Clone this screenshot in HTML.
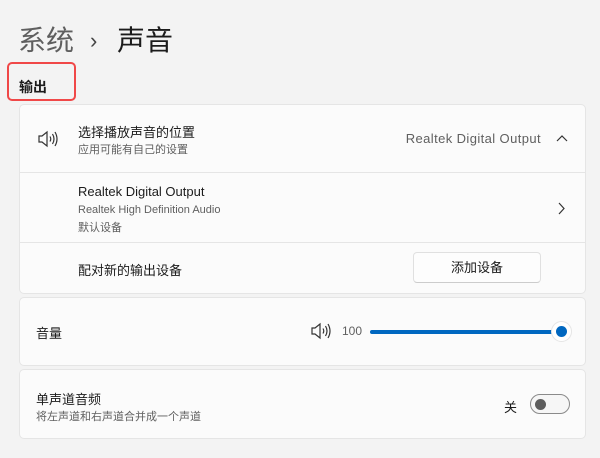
<!DOCTYPE html>
<html><head><meta charset="utf-8"><style>
*{margin:0;padding:0;box-sizing:border-box}
body{width:600px;height:458px;background:#f3f3f3;font-family:"Liberation Sans","Noto Sans CJK SC",sans-serif;position:relative;overflow:hidden;color:#1b1b1b}
.a{position:absolute}
.card{position:absolute;left:19px;width:567px;background:#fbfbfb;border:1px solid #e5e5e5;border-radius:5px}
.t{font-size:13px;color:#1b1b1b}
.s{font-size:11px;color:#5f5f5f}
</style></head><body>
<div class="a" style="left:18px;top:22px;font-size:28px;color:#5f5f5f;line-height:38px">系统</div>
<div class="a" style="left:90px;top:22px;font-size:22px;color:#444;line-height:38px">›</div>
<div class="a" style="left:117px;top:22px;font-size:28px;color:#1b1b1b;line-height:38px">声音</div>
<div class="a" style="left:7px;top:62px;width:69px;height:39px;border:2.5px solid #f04848;border-radius:5px"></div>
<div class="a" style="left:19px;top:78px;font-size:14px;font-weight:bold;line-height:18px">输出</div>

<div class="card" style="top:104px;height:190px">
 <div class="a" style="left:0;top:67px;width:565px;border-top:1px solid #e5e5e5"></div>
 <div class="a" style="left:0;top:137px;width:565px;border-top:1px solid #e5e5e5"></div>
</div>
<svg class="a" style="left:37px;top:129px" width="22" height="20" viewBox="0 0 22 20" fill="none" stroke="#333" stroke-width="1.2"><path d="M2 7h3l5-4v14l-5-4H2z"/><path d="M13 7.5q1.5 2.5 0 5M15.5 5q3 5 0 10M18 3q4 7 0 14"/></svg>
<div class="a t" style="left:78px;top:122px">选择播放声音的位置</div>
<div class="a s" style="left:78px;top:141px">应用可能有自己的设置</div>
<div class="a" style="right:59px;top:131px;font-size:13px;color:#5f5f5f;letter-spacing:0.4px">Realtek Digital Output</div>
<svg class="a" style="left:556px;top:134px" width="12" height="8"><path d="M1 7l5-5 5 5" fill="none" stroke="#333" stroke-width="1.2"/></svg>
<div class="a t" style="left:78px;top:184px">Realtek Digital Output</div>
<div class="a s" style="left:78px;top:204px">Realtek High Definition Audio</div>
<div class="a s" style="left:78px;top:219px">默认设备</div>
<svg class="a" style="left:558px;top:202px" width="8" height="13"><path d="M1 1l5 5.5-5 5.5" fill="none" stroke="#333" stroke-width="1.2"/></svg>
<div class="a t" style="left:78px;top:260px">配对新的输出设备</div>
<div class="a" style="left:413px;top:252px;width:128px;height:31px;background:#fdfdfd;border:1px solid #e0e0e0;border-bottom-color:#ccc;border-radius:4px;font-size:13px;text-align:center;line-height:29px">添加设备</div>

<div class="card" style="top:297px;height:69px"></div>
<div class="a t" style="left:36px;top:323px">音量</div>
<svg class="a" style="left:310px;top:321px" width="22" height="20" viewBox="0 0 22 20" fill="none" stroke="#333" stroke-width="1.2"><path d="M2 7h3l5-4v14l-5-4H2z"/><path d="M13 7.5q1.5 2.5 0 5M15.5 5q3 5 0 10M18 3q4 7 0 14"/></svg>
<div class="a" style="left:342px;top:324px;font-size:12px;color:#5f5f5f">100</div>
<div class="a" style="left:370px;top:330px;width:190px;height:4px;background:#0067c0;border-radius:2px"></div>
<div class="a" style="left:551px;top:321px;width:21px;height:21px;border-radius:50%;background:#fff;border:1px solid #e5e5e5"></div>
<div class="a" style="left:556px;top:326px;width:11px;height:11px;border-radius:50%;background:#0067c0"></div>

<div class="card" style="top:369px;height:70px"></div>
<div class="a t" style="left:36px;top:389px">单声道音频</div>
<div class="a s" style="left:36px;top:408px">将左声道和右声道合并成一个声道</div>
<div class="a" style="left:504px;top:397px;font-size:13px">关</div>
<div class="a" style="left:530px;top:394px;width:40px;height:20px;border:1px solid #8a8a8a;border-radius:10px;background:#f6f6f6"></div>
<div class="a" style="left:535px;top:399px;width:11px;height:11px;border-radius:50%;background:#5d5d5d"></div>
</body></html>
